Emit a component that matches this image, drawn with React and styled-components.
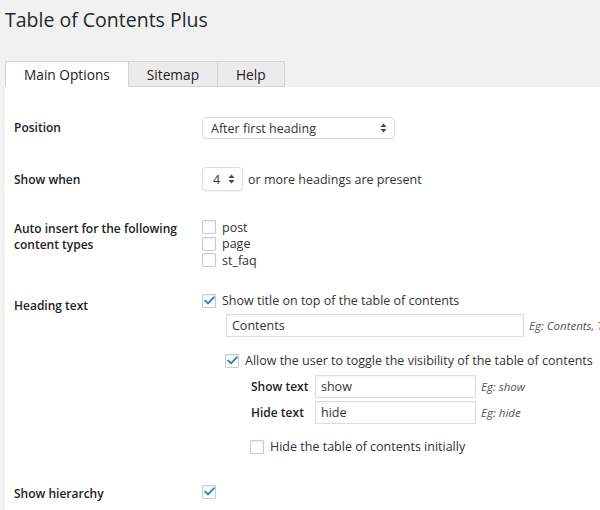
import React from "react";
import styled, { createGlobalStyle } from "styled-components";

const Global = createGlobalStyle`
  html, body { margin: 0; padding: 0; background: #f1f1f1; }
  body { font-family: "Open Sans", "Liberation Sans", sans-serif; color: #222; }
  * { box-sizing: border-box; }
`;

const Page = styled.div`
  padding-left: 5px;
  width: 600px;
  height: 510px;
  overflow: hidden;
`;

const Title = styled.h2`
  margin: 0;
  padding: 6px 0 0 0;
  font-size: 19.5px;
  line-height: 28px;
  font-weight: 400;
  color: #23282d;
`;

const Tabs = styled.div`
  display: flex;
  margin-top: 27px;
  height: 26px;
`;

const Tab = styled.div`
  height: 26px;
  padding: 0 18px;
  display: flex;
  align-items: center;
  font-size: 13.7px;
  color: #222;
  border: 1px solid #d4d4d4;
  border-bottom: ${(p) => (p.$active ? "none" : "1px solid #d4d4d4")};
  margin-left: -1px;
  background: ${(p) => (p.$active ? "#fff" : "#ebebeb")};
  &:first-child { margin-left: 0; }
`;

const Panel = styled.div`
  background: #fff;
  padding-top: 16px;
  min-height: 440px;
`;

const Row = styled.div`
  display: grid;
  grid-template-columns: 197px 1fr;
  padding: ${(p) => p.$pt ?? 14}px 0 ${(p) => p.$pb ?? 14}px 0;
`;

const Label = styled.div`
  padding-left: 9px;
  padding-top: ${(p) => p.$pt ?? 0}px;
  font-size: 12px;
  font-weight: 600;
  line-height: ${(p) => p.$lh || 16}px;
  color: #222;
`;

const Cell = styled.div`
  display: flex;
  flex-direction: column;
  align-items: flex-start;
  font-size: 12.5px;
  color: #333;
`;

const SelectBox = styled.div`
  width: ${(p) => p.$w}px;
  height: ${(p) => p.$h}px;
  border: 1px solid #dcdcdc;
  border-radius: 4px;
  box-shadow: 0 1px 1px rgba(0, 0, 0, 0.05);
  display: flex;
  align-items: center;
  justify-content: space-between;
  padding: 0 7px 0 ${(p) => p.$pl}px;
  font-size: 12.5px;
  color: #333;
  background: #fff;
`;

const Inline = styled.div`
  display: flex;
  align-items: center;
  gap: 5px;
  font-size: 12.5px;
  color: #333;
`;

const CheckList = styled.div`
  display: flex;
  flex-direction: column;
`;

const CheckLine = styled.div`
  display: flex;
  align-items: center;
  gap: 6px;
  height: ${(p) => p.$h || 16.5}px;
  margin-left: ${(p) => p.$ml || 0}px;
  margin-top: ${(p) => p.$mt || 0}px;
  font-size: 12.5px;
  color: #333;
`;

const Box = styled.span`
  width: 14px;
  height: 14px;
  border: 1px solid #c8ccd0;
  border-radius: 1px;
  background: #fff;
  box-shadow: inset 0 1px 2px rgba(0, 0, 0, 0.08);
  display: inline-flex;
  align-items: center;
  justify-content: center;
  flex: none;
`;

const TextInput = styled.div`
  width: ${(p) => p.$w}px;
  height: 23px;
  border: 1px solid #ddd;
  box-shadow: inset 0 1px 2px rgba(0, 0, 0, 0.05);
  padding: 0 5px;
  display: flex;
  align-items: center;
  font-size: 12.5px;
  color: #333;
  background: #fff;
  flex: none;
`;

const Hint = styled.span`
  font-size: 11.5px;
  font-style: italic;
  color: #555;
  white-space: nowrap;
`;

const FieldLine = styled.div`
  display: flex;
  align-items: center;
  gap: 5px;
  margin-left: ${(p) => p.$ml || 0}px;
  margin-top: ${(p) => p.$mt || 0}px;
`;

const SubLabel = styled.span`
  width: 59px;
  font-size: 12px;
  font-weight: 600;
  color: #222;
`;

const Arrows = () => (
  <svg width="7" height="10" viewBox="0 0 7 10">
    <path d="M3.5 0.5 L6.5 4 L0.5 4 Z M3.5 9.5 L6.5 6 L0.5 6 Z" fill="#444" />
  </svg>
);

const Check = ({ checked }) => (
  <Box>
    {checked && (
      <svg width="11" height="9" viewBox="0 0 11 9">
        <path d="M1.2 4.6 L4 7.4 L9.8 1.4" fill="none" stroke="#1e8cbe" strokeWidth="2" strokeLinecap="round" strokeLinejoin="round" />
      </svg>
    )}
  </Box>
);

export default function App() {
  return (
    <Page>
      <Global />
      <Title>Table of Contents Plus</Title>
      <Tabs>
        <Tab $active>Main Options</Tab>
        <Tab>Sitemap</Tab>
        <Tab>Help</Tab>
      </Tabs>
      <Panel>
        <Row>
          <Label $lh={22}>Position</Label>
          <Cell>
            <SelectBox $w={193} $h={22} $pl={8}>
              <span>After first heading</span>
              <Arrows />
            </SelectBox>
          </Cell>
        </Row>
        <Row $pb={13}>
          <Label $lh={24} $pt={1}>Show when</Label>
          <Cell>
            <Inline>
              <SelectBox $w={41} $h={24} $pl={10}>
                <span>4</span>
                <Arrows />
              </SelectBox>
              <span>or more headings are present</span>
            </Inline>
          </Cell>
        </Row>
        <Row>
          <Label $pt={2}>
            Auto insert for the following
            <br />
            content types
          </Label>
          <Cell>
            <CheckList>
              <CheckLine><Check /><span>post</span></CheckLine>
              <CheckLine><Check /><span>page</span></CheckLine>
              <CheckLine><Check /><span>st_faq</span></CheckLine>
            </CheckList>
          </Cell>
        </Row>
        <Row $pt={11} $pb={17}>
          <Label $pt={4}>Heading text</Label>
          <Cell>
            <CheckLine $h={14}><Check checked /><span>Show title on top of the table of contents</span></CheckLine>
            <FieldLine $ml={24} $mt={6}>
              <TextInput $w={298}>Contents</TextInput>
              <Hint>Eg: Contents, Table of Contents, Page Contents</Hint>
            </FieldLine>
            <CheckLine $h={14} $ml={23} $mt={17}>
              <Check checked /><span>Allow the user to toggle the visibility of the table of contents</span>
            </CheckLine>
            <FieldLine $ml={49} $mt={7}>
              <SubLabel>Show text</SubLabel>
              <TextInput $w={161}>show</TextInput>
              <Hint>Eg: show</Hint>
            </FieldLine>
            <FieldLine $ml={49} $mt={3}>
              <SubLabel>Hide text</SubLabel>
              <TextInput $w={161}>hide</TextInput>
              <Hint>Eg: hide</Hint>
            </FieldLine>
            <CheckLine $h={14} $ml={48} $mt={16}>
              <Check /><span>Hide the table of contents initially</span>
            </CheckLine>
          </Cell>
        </Row>
        <Row>
          <Label $lh={14} $pt={2}>Show hierarchy</Label>
          <Cell>
            <CheckLine $h={14}><Check checked /></CheckLine>
          </Cell>
        </Row>
      </Panel>
    </Page>
  );
}
